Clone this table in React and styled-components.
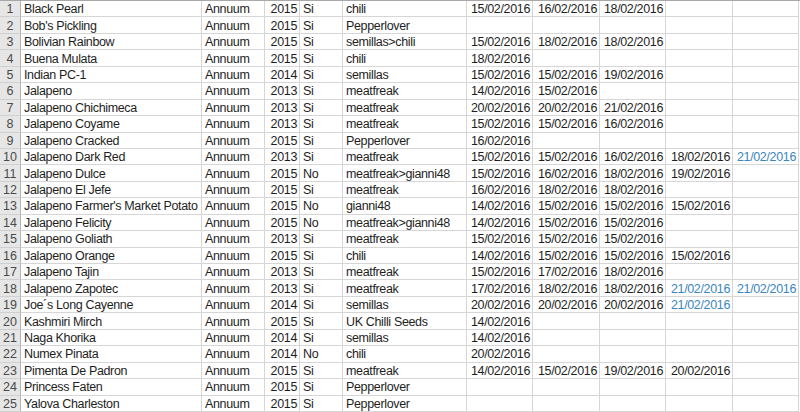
import React from "react";
import styled, { createGlobalStyle } from "styled-components";

const GlobalStyle = createGlobalStyle`
  html, body { margin: 0; padding: 0; background: #fff; }
  body { font-family: "Liberation Sans", Arial, sans-serif; overflow: hidden; }
`;

// column widths: header, name, species, year, ok, source, five dates
const COLS = "21px 181px 63px 35px 43px 124px 66px 67px 66px 67px 66px";

const rows = [
  ["Black Pearl", "2015", "Si", "chili", "15/02/2016", "16/02/2016", "18/02/2016"],
  ["Bob's Pickling", "2015", "Si", "Pepperlover"],
  ["Bolivian Rainbow", "2015", "Si", "semillas>chili", "15/02/2016", "18/02/2016", "18/02/2016"],
  ["Buena Mulata", "2015", "Si", "chili", "18/02/2016"],
  ["Indian PC-1", "2014", "Si", "semillas", "15/02/2016", "15/02/2016", "19/02/2016"],
  ["Jalapeno", "2013", "Si", "meatfreak", "14/02/2016", "15/02/2016"],
  ["Jalapeno Chichimeca", "2013", "Si", "meatfreak", "20/02/2016", "20/02/2016", "21/02/2016"],
  ["Jalapeno Coyame", "2013", "Si", "meatfreak", "15/02/2016", "15/02/2016", "16/02/2016"],
  ["Jalapeno Cracked", "2015", "Si", "Pepperlover", "16/02/2016"],
  ["Jalapeno Dark Red", "2013", "Si", "meatfreak", "15/02/2016", "15/02/2016", "16/02/2016", "18/02/2016", "*21/02/2016"],
  ["Jalapeno Dulce", "2015", "No", "meatfreak>gianni48", "15/02/2016", "16/02/2016", "18/02/2016", "19/02/2016"],
  ["Jalapeno El Jefe", "2015", "Si", "meatfreak", "16/02/2016", "18/02/2016", "18/02/2016"],
  ["Jalapeno Farmer's Market Potato", "2015", "No", "gianni48", "14/02/2016", "15/02/2016", "15/02/2016", "15/02/2016"],
  ["Jalapeno Felicity", "2015", "No", "meatfreak>gianni48", "14/02/2016", "15/02/2016", "15/02/2016"],
  ["Jalapeno Goliath", "2013", "Si", "meatfreak", "15/02/2016", "15/02/2016", "15/02/2016"],
  ["Jalapeno Orange", "2015", "Si", "chili", "14/02/2016", "15/02/2016", "15/02/2016", "15/02/2016"],
  ["Jalapeno Tajin", "2013", "Si", "meatfreak", "15/02/2016", "17/02/2016", "18/02/2016"],
  ["Jalapeno Zapotec", "2013", "Si", "meatfreak", "17/02/2016", "18/02/2016", "18/02/2016", "*21/02/2016", "*21/02/2016"],
  ["Joe´s Long Cayenne", "2014", "Si", "semillas", "20/02/2016", "20/02/2016", "20/02/2016", "*21/02/2016"],
  ["Kashmiri Mirch", "2015", "Si", "UK Chilli Seeds", "14/02/2016"],
  ["Naga Khorika", "2014", "Si", "semillas", "14/02/2016"],
  ["Numex Pinata", "2014", "No", "chili", "20/02/2016"],
  ["Pimenta De Padron", "2015", "Si", "meatfreak", "14/02/2016", "15/02/2016", "19/02/2016", "20/02/2016"],
  ["Princess Faten", "2015", "Si", "Pepperlover"],
  ["Yalova Charleston", "2015", "Si", "Pepperlover"],
];

const Sheet = styled.div`
  width: 800px;
  border-top: 1px solid #a8a8a8;
  font-size: 12.5px;
  letter-spacing: -0.35px;
  color: #1e1e1e;
`;

const Row = styled.div`
  display: grid;
  grid-template-columns: ${COLS};
  height: 16.44px;
`;

const Cell = styled.div`
  box-sizing: border-box;
  border-right: 1px solid #d6d6d6;
  border-bottom: 1px solid #d6d6d6;
  padding: 1px 2px 0 3px;
  display: flex;
  align-items: center;
  justify-content: ${(p) => (p.$right ? "flex-end" : "flex-start")};
  white-space: nowrap;
  overflow: hidden;
  color: ${(p) => (p.$link ? "#3a86bd" : "inherit")};
`;

const RowHead = styled(Cell)`
  justify-content: center;
  padding: 1px 0 0;
  background: #e6e6e6;
  color: #4a4a4a;
  border-right-color: #b4b4b4;
  border-bottom-color: #d0d0d0;
  letter-spacing: 0;
`;

export default function App() {
  return (
    <>
      <GlobalStyle />
      <Sheet>
        {rows.map(([name, year, ok, source, ...dates], i) => (
          <Row key={name}>
            <RowHead>{i + 1}</RowHead>
            <Cell>{name}</Cell>
            <Cell>Annuum</Cell>
            <Cell $right>{year}</Cell>
            <Cell>{ok}</Cell>
            <Cell>{source}</Cell>
            {[0, 1, 2, 3, 4].map((d) => {
              const v = dates[d] || "";
              const link = v.startsWith("*");
              return (
                <Cell key={d} $right $link={link}>
                  {link ? v.slice(1) : v}
                </Cell>
              );
            })}
          </Row>
        ))}
      </Sheet>
    </>
  );
}
